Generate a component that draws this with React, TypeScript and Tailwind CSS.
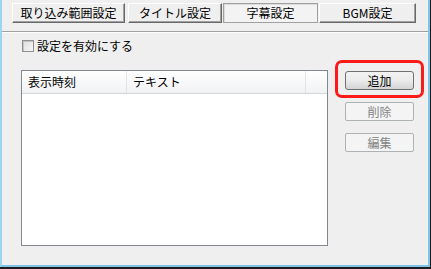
const FONT = '"Noto Sans CJK JP", "Noto Sans", sans-serif';

function TabButton({ label, width, pressed }: { label: string; width: number; pressed?: boolean }) {
  return (
    <div
      style={{ width }}
      className={
        pressed
          ? "flex h-[20px] items-center justify-center border border-[#a0a0a0] bg-[#f3f3f3] text-[12px] leading-none shadow-[inset_1px_1px_0_#dcdcdc]"
          : "flex h-[20px] items-center justify-center border-t border-l border-r border-b border-t-white border-l-white border-r-[#696969] border-b-[#696969] bg-[#efefef] text-[12px] leading-none shadow-[inset_-1px_-1px_0_#a0a0a0]"
      }
    >
      {label}
    </div>
  );
}

function ActionButton({ label, disabled }: { label: string; disabled?: boolean }) {
  return (
    <div
      className={
        disabled
          ? "flex h-[19px] w-[69px] items-center justify-center rounded-[2px] border border-[#adb2b5] bg-[#f4f4f4] text-[12px] leading-none text-[#838383]"
          : "flex h-[19px] w-[69px] items-center justify-center rounded-[3px] border border-[#707070] bg-gradient-to-b from-[#f2f2f2] via-[#ebebeb] to-[#d4d4d4] text-[12px] leading-none text-black"
      }
    >
      {label}
    </div>
  );
}

export default function App() {
  return (
    <div
      className="h-[269px] w-[431px] border-r border-b-2 border-[#1c1c1c] bg-[#efefef] text-black"
      style={{ fontFamily: FONT }}
    >
      <div className="flex h-full flex-col border-l-2 border-r-2 border-b-2 border-l-[#9fd3ef] border-r-[#7fc3e8] border-b-[#7fc3e8]">
        {/* tab row */}
        <div className="flex items-start pl-[10px] pt-[3px]">
          <TabButton label="取り込み範囲設定" width={113} />
          <div className="ml-[3px]">
            <TabButton label="タイトル設定" width={94} />
          </div>
          <div className="ml-[1px]">
            <TabButton label="字幕設定" width={95} pressed />
          </div>
          <div className="ml-[1px]">
            <TabButton label="BGM設定" width={97} />
          </div>
        </div>
        <div className="mt-[8px] h-px bg-[#a0a0a0]" />
        <div className="h-px bg-white" />

        {/* enable checkbox */}
        <label className="mt-[7px] flex items-center pl-[20px]">
          <span className="h-[12px] w-[12px] border border-[#8f8f8f] bg-gradient-to-br from-[#dedede] to-[#f7f7f7] shadow-[inset_1px_1px_0_#c4c4c4]" />
          <span className="ml-[3px] text-[12px] leading-none">設定を有効にする</span>
        </label>

        {/* list + buttons */}
        <div className="mt-[18px] flex items-start pl-[19px]">
          <div className="h-[176px] w-[307px] border border-[#828790] bg-white">
            <div className="flex h-[23px] border-b border-[#d5d5d5] bg-gradient-to-b from-white to-[#f1f2f4] text-[12px] leading-none">
              <div className="flex w-[105px] items-center border-r border-[#e3e4e6] pl-[6px]">表示時刻</div>
              <div className="flex w-[179px] items-center border-r border-[#e3e4e6] pl-[6px]">テキスト</div>
              <div className="flex-1" />
            </div>
          </div>

          <div className="ml-[17px] flex flex-col gap-[12px] pt-px">
            <div className="relative">
              <div className="pointer-events-none absolute -left-[10px] -top-[11px] h-[38px] w-[89px] rounded-[7px] border-[3px] border-[#ff1a1a]" />
              <ActionButton label="追加" />
            </div>
            <ActionButton label="削除" disabled />
            <ActionButton label="編集" disabled />
          </div>
        </div>
      </div>
    </div>
  );
}
